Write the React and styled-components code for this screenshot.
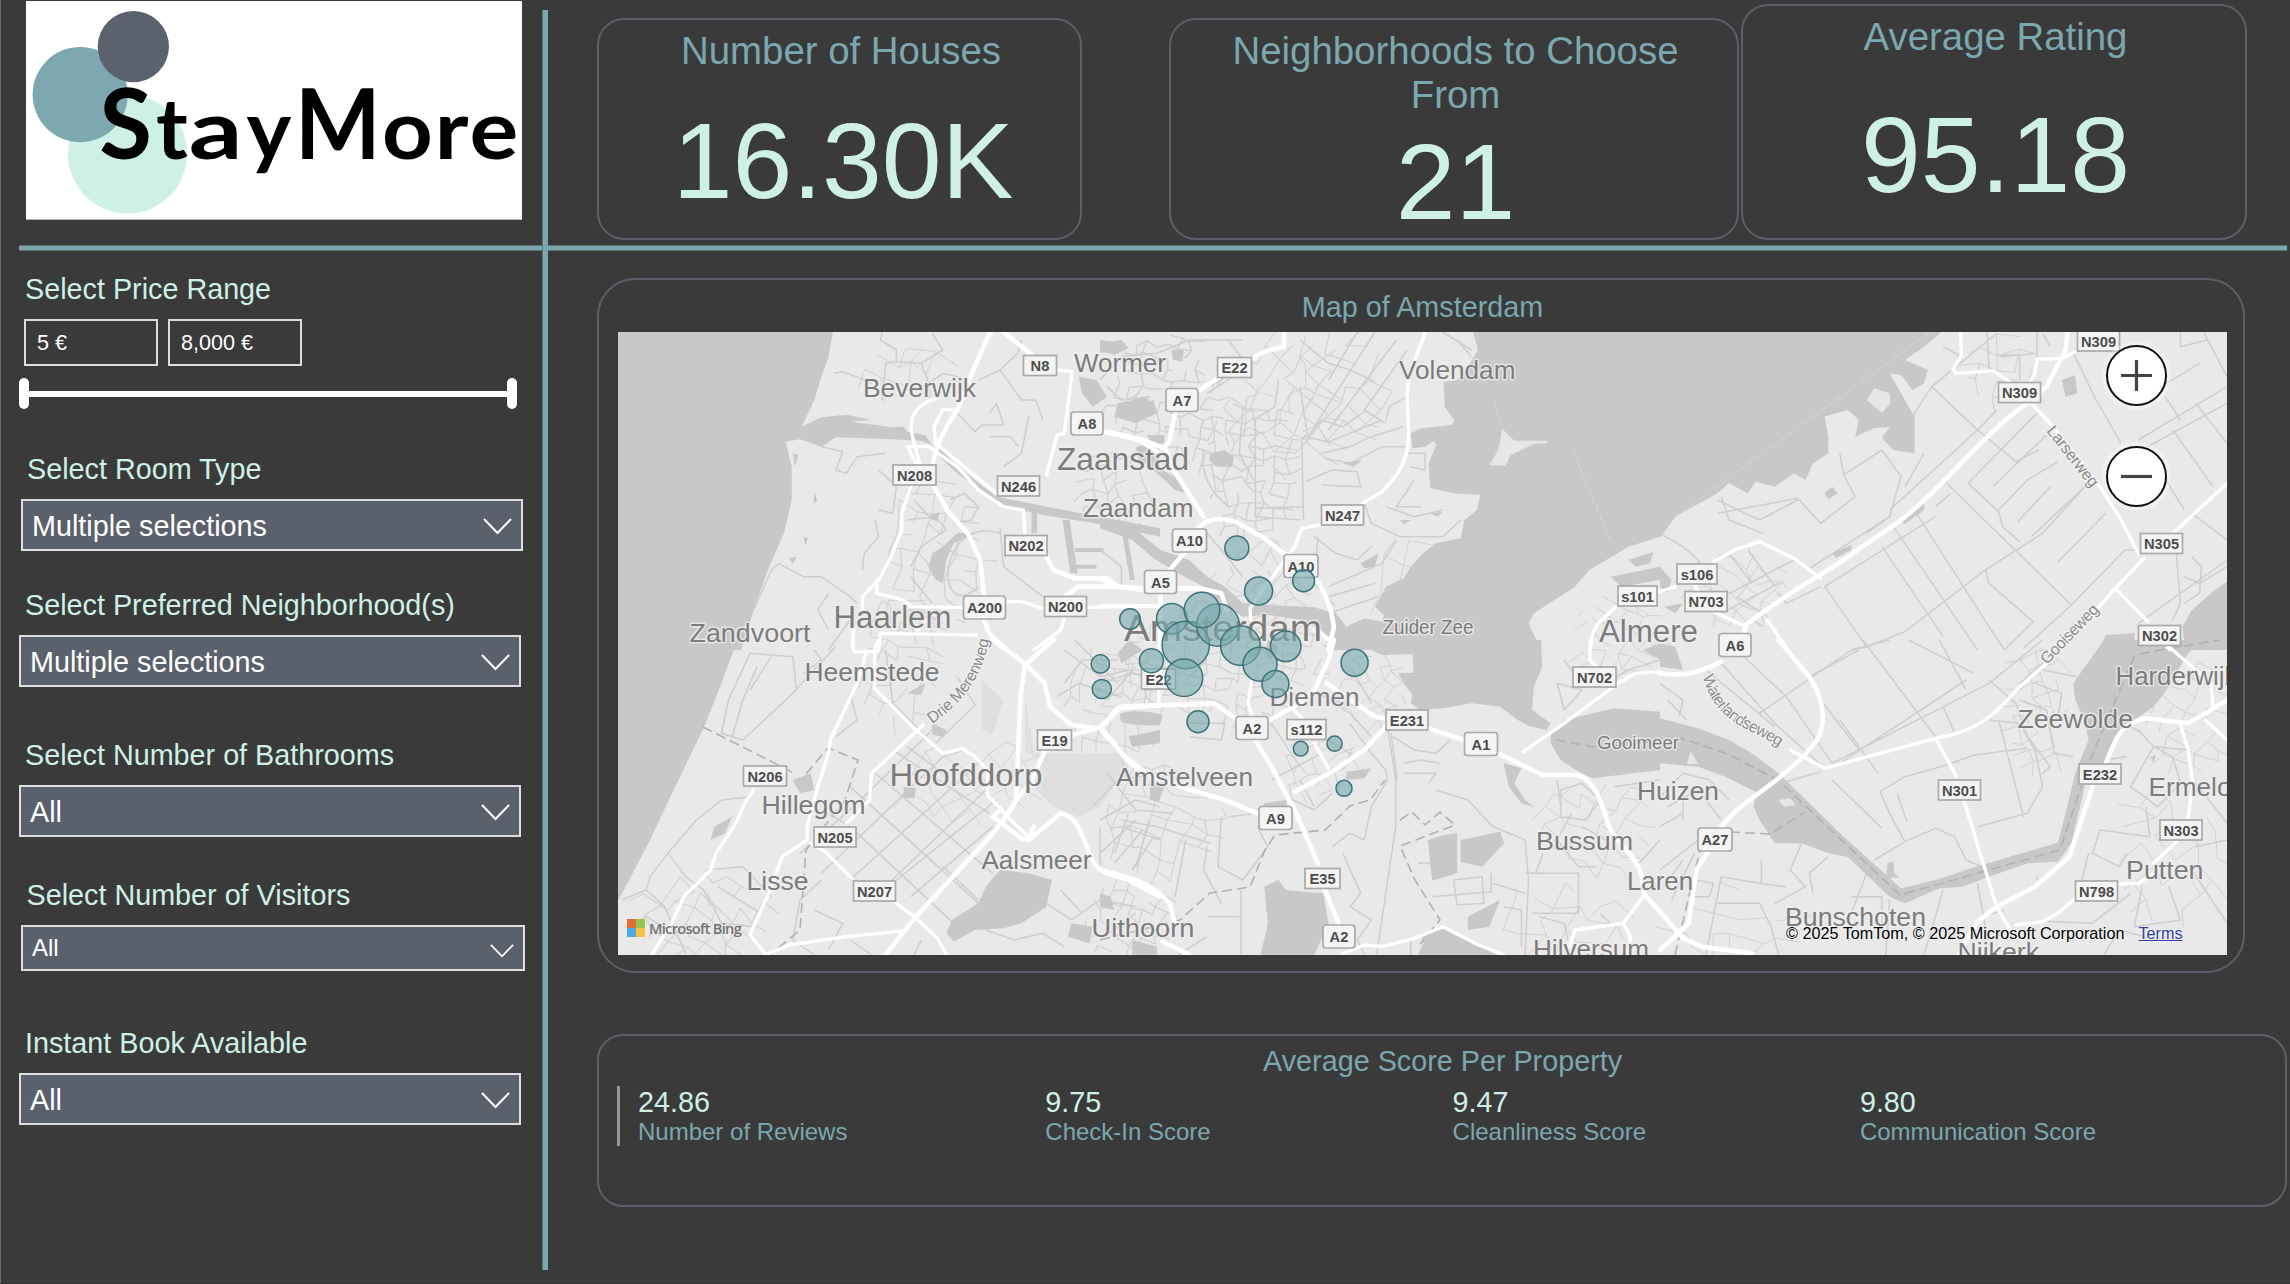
import React from "react";
import styled, { createGlobalStyle } from "styled-components";

const c = {
  bg: "#3a3a3a",
  mint: "#cff0e6",
  teal: "#7ba7af",
  slate: "#5b616c",
  line: "#5b606b",
  soft: "#5b7175",
};

const Global = createGlobalStyle`
  html, body { margin: 0; background: ${c.bg}; }
  *, *::before, *::after { box-sizing: border-box; }
  body { font-family: "Liberation Sans", Arial, sans-serif; overflow: hidden; }
`;

const Page = styled.div`
  display: grid;
  grid-template-columns: 542px 6px 1fr;
  grid-template-rows: 245px 6px 1fr;
  width: 2290px;
  height: 1284px;
  background: ${c.bg};
  border-bottom: 1px solid #333;
  box-shadow: inset 1px 0 #6c6c6c;
`;

const HRule = styled.div`
  grid-column: 1 / 4;
  grid-row: 2;
  margin: 0 3px 0 19px;
  background: ${c.teal};
  border: solid ${c.soft};
  border-width: 1px 0;
`;

const VRule = styled.div`
  grid-column: 2;
  grid-row: 1 / 4;
  margin: 10px 0 13px;
  background: ${c.teal};
  border-left: 1px solid ${c.soft};
`;

const LogoCell = styled.div`
  grid-column: 1;
  grid-row: 1;
  padding: 1px 0 0 26px;
`;

const Logo = styled.svg`
  display: block;
  width: 496px;
  height: 219px;
  background: #fff;
  border-bottom: 1px solid #b5b5b5;
  font-family: Lato, sans-serif;
  font-weight: 700;
`;

const Sidebar = styled.aside`
  grid-column: 1;
  grid-row: 3;
  display: flex;
  flex-direction: column;
  padding-top: 22px;
`;

const Filter = styled.section`
  display: flex;
  flex-direction: column;
  gap: 14px;
  height: ${(p) => p.$h}px;
  padding-left: ${(p) => p.$x}px;
`;

const FilterLabel = styled.label`
  padding-left: ${(p) => p.$inset}px;
  line-height: 32px;
  font-size: 28.75px;
  color: ${c.mint};
  white-space: nowrap;
`;

const Select = styled.div`
  display: flex;
  align-items: center;
  justify-content: space-between;
  width: ${(p) => p.$w}px;
  height: ${(p) => (p.$small ? 46 : 52)}px;
  padding: ${(p) => (p.$small ? "0 9px 0 9px" : "2px 9px 0 9px")};
  border: 2px solid #dedede;
  background: ${c.slate};
  color: #fff;
  font-size: ${(p) => (p.$small ? 24 : 28.75)}px;
`;

const Chevron = styled.svg`
  width: ${(p) => (p.$small ? 24 : 29)}px;
  height: ${(p) => (p.$small ? 14 : 17)}px;
  margin-top: ${(p) => (p.$small ? 5 : 1)}px;
  fill: none;
  stroke: #fff;
  stroke-width: 2;
`;

const PriceRow = styled.div`
  display: flex;
  gap: 10px;
  padding-left: 5px;
`;

const PriceInput = styled.div`
  width: 134px;
  height: 47px;
  padding: 0 11px;
  border: 2px solid #dcdcdc;
  color: #fff;
  font-size: 21.6px;
  line-height: 44px;
`;

const Slider = styled.div`
  display: flex;
  align-items: center;
  width: 498px;
  height: 31px;
  margin-top: -2px;
`;

const Handle = styled.div`
  width: 10px;
  height: 31px;
  border-radius: 5px;
  background: #fff;
`;

const Track = styled.div`
  flex: 1;
  height: 6px;
  margin: 0 -1px;
  background: #fff;
`;

const Kpis = styled.header`
  grid-column: 3;
  grid-row: 1;
  display: flex;
  align-items: flex-end;
  padding: 0 0 5px 49px;
`;

const Kpi = styled.section`
  width: ${(p) => p.$w}px;
  height: ${(p) => p.$h}px;
  margin-right: ${(p) => p.$gap}px;
  padding: 9px 50px 0 53px;
  border: 2px solid ${c.line};
  border-radius: 27px;
  text-align: center;
`;

const KpiTitle = styled.h2`
  margin: 0;
  font-size: 38.4px;
  font-weight: 400;
  line-height: 44px;
  color: ${c.teal};
`;

const KpiValue = styled.div`
  margin-top: ${(p) => p.$mt}px;
  padding-left: ${(p) => p.$shift || 0}px;
  font-size: 107.5px;
  line-height: 110px;
  color: ${c.mint};
`;

const Main = styled.main`
  grid-column: 3;
  grid-row: 3;
  display: flex;
  flex-direction: column;
  gap: 61px;
  padding: 27px 3px 0 49px;
`;

const PanelTitle = styled.h3`
  margin: 0;
  font-size: 28.75px;
  font-weight: 400;
  line-height: 32px;
  text-align: center;
  padding-left: 1px;
  color: ${c.teal};
`;

const MapPanel = styled.section`
  width: 1648px;
  height: 695px;
  padding: 11px 17px 0 19px;
  border: 2px solid ${c.line};
  border-radius: 38px;
`;

const MapFrame = styled.div`
  position: relative;
  margin-top: 9px;
  width: 1609px;
  height: 623px;
  overflow: hidden;
`;

const MapSvg = styled.svg`
  display: block;
  width: 1609px;
  height: 623px;
  background: #e9e9e9;
`;

const MapControls = styled.div`
  position: absolute;
  top: 13px;
  right: 60px;
  display: flex;
  flex-direction: column;
  gap: 40px;
`;

const ZoomButton = styled.button`
  display: grid;
  place-items: center;
  width: 61px;
  height: 61px;
  padding: 0;
  border: 2px solid #111;
  border-radius: 50%;
  background: #fff;
  box-shadow: 0 0 0 4px rgba(255, 255, 255, 0.35);

  svg { width: 31px; height: 31px; stroke: #444; stroke-width: 3.2; }
`;

const BingMark = styled.div`
  position: absolute;
  left: 9px;
  bottom: 18px;
  display: flex;
  align-items: center;
  gap: 4px;
  color: #737373;
  font: 600 14.6px/18px "Open Sans", sans-serif;
  letter-spacing: -0.7px;
`;

const BingTiles = styled.div`
  display: grid;
  grid-template-columns: 9px 9px;
  grid-template-rows: 9px 9px;
`;

const BingTile = styled.span`
  background: ${(p) => p.$color};
`;

const Credits = styled.div`
  position: absolute;
  left: 1168px;
  bottom: 13px;
  display: flex;
  gap: 14px;
  color: #000;
  font-size: 16.2px;
  line-height: 18px;
  white-space: nowrap;
  text-shadow: 0 0 2px #fff;
`;

const TermsLink = styled.span`
  color: #2f3fa0;
  text-decoration: underline;
`;

const ScorePanel = styled.section`
  height: 173px;
  padding: 9px 18px 0;
  border: 2px solid ${c.line};
  border-radius: 26px;
`;

const ScoreRow = styled.div`
  display: grid;
  grid-template-columns: repeat(4, 407.3px);
  height: 60px;
  margin-top: 9px;
  padding-left: 18px;
  border-left: 3px solid #979593;
`;

const Score = styled.div`
  display: flex;
  flex-direction: column;
`;

const ScoreValue = styled.span`
  font-size: 28.75px;
  line-height: 32px;
  color: ${c.mint};
`;

const ScoreLabel = styled.span`
  font-size: 24px;
  line-height: 27px;
  color: ${c.teal};
`;

/* ---------- map data ---------- */

const TILES = [
  {
    t: "translate(600 320) scale(.35714 .33333)",
    water: [
      "M0 36H652L640 110L620 170L600 240L565 320L620 292L690 284L760 300L700 305L820 322L850 320L860 335L910 345L930 375L900 362L800 357L660 352L620 380L560 358L520 365L537 440L537 540L515 640L470 750L430 870L395 990H0Z",
      "M950 385L1020 455L1110 530L1250 560L1400 590L1568 625V650L1400 612L1240 585L1120 555L1000 460L930 390Z",
      "M1208 570h16v70h-16zM1295 600h20l22 160h-20zM1330 684h80v12h-80zM1330 734h60v12h-60zM1458 615l14 0l26 165h-14z",
      "M930 700L960 680L1000 640L1050 640L990 670L970 720L960 790L940 780L920 740Z",
      "M1400 70L1460 60L1480 85L1440 105L1400 92ZM1340 170L1390 180L1420 230L1380 260L1350 220ZM1450 250L1530 230L1560 280L1500 310L1440 290ZM1500 380L1568 370V440L1510 430Z",
      "M540 400L556 405L545 440ZM600 515L608 540L598 552ZM570 650L582 655L575 678ZM530 715L550 710L540 732ZM920 590L950 575L945 605Z",
    ],
    dim: [],
    roads: [
      "M1095 36C1060 100 1040 170 1000 270C960 330 940 380 930 440M930 490L975 575L1030 640L1065 720L1075 830M1075 900L1090 940L1140 990",
      "M1130 36L1215 110M1410 335L1510 360L1568 400",
      "M1250 710L1270 750L1330 775L1420 775L1450 800L1520 810M1300 830L1340 800L1450 800",
    ],
    lanes: [
      "M1270 148L1322 155L1310 260L1300 340L1280 345L1250 465",
      "M940 235C890 250 860 290 875 350L895 430M985 270L960 268L935 320L940 370L1110 520M860 380L920 380L1000 440L1060 510L1130 560L1185 570L1190 640M862 380L885 430",
      "M870 500L845 580L845 630L815 710L780 780L735 830L735 870M775 780V820L850 840L870 860L1015 862M890 930L910 900",
      "M1140 845L1180 845L1240 865M1365 862L1568 858M1300 895L1290 930L1215 990M780 990L785 940L1055 945M710 925L708 985",
    ],
    minor: [
      "M790 36L785 60L830 90L830 125L800 130L790 240M830 125L900 130L960 90L930 40M655 160L680 155L730 175L760 190M900 130L920 190L960 160L1000 170L1040 190",
      "M1060 180L1120 150L1180 240L1220 240L1240 300M1120 150L1170 100L1180 60M1000 280L1050 335L1070 315L1130 315L1110 250L1090 280M1090 350L1150 350L1170 380M1200 290L1180 400L1130 440",
      "M620 380L680 395L660 450L690 460L720 410L800 400M500 730L480 750L430 870M500 730L570 770L620 770L700 830L720 850M640 820L610 870L640 930M780 450L830 500L820 580L780 570",
      "M770 600L780 650L740 700L735 750M860 600L940 590L970 630L900 680L870 740M880 540L930 600M980 540L1020 520L1060 560L1040 600L990 610M1120 620L1130 740L1240 830M870 770L930 850M820 870L900 870L960 910M700 900L640 990",
      "M975 740C1000 640 1060 620 1120 640M975 740C970 830 1010 850 1060 800",
    ],
  },
  {
    t: "translate(1100 320) scale(.35714 .33333)",
    water: [
      "M1045 36L1058 90L1030 140L1000 180L962 185L965 260L992 300L985 315L900 325L870 340L875 385L910 380L935 362L942 375L920 430L925 505L990 520L1065 525L1055 570L1020 600L1010 655L940 670L905 700L870 740L850 775L800 800L770 860L795 885L790 905L740 895L690 920L660 880L600 862L480 856L470 884L560 900L620 930L660 975L640 990H1235L1200 910L1215 880L1330 800L1370 750L1480 680L1568 650V36Z",
      "M0 590L100 630L170 690L250 720L300 770L350 800L400 850L480 856L470 884L400 890L340 850L290 800L220 760L150 715L90 660L0 625Z",
      "M310 400L350 390L375 410L370 440L330 440L305 420ZM130 345L180 345L180 370L150 375ZM90 260L150 240L160 280L120 290ZM200 90L235 90L230 125L205 120ZM0 60L60 70L50 95L0 98ZM120 420L210 470L240 520L210 510Z",
      "M730 730L780 700L770 740L740 745ZM680 430L735 420L710 440ZM840 600L870 600L850 612ZM925 580L960 575L945 590Z",
      "M1430 770L1568 740V780L1460 800ZM1480 720L1550 695L1540 730L1500 740Z",
    ],
    land: ["M1125 325L1160 362L1255 362L1250 370L1215 372L1150 405L1135 437L1090 435L1110 400L1120 370Z"],
    dim: [],
    roads: [
      "M515 36V80L460 95L420 120M330 175L280 210M210 280L195 360L180 385L120 360L20 335M185 390L200 440L290 590",
      "M275 625C300 590 350 595 380 605L460 655L520 705M600 770C640 830 650 880 655 920L640 990",
      "M235 700L195 750M0 775L40 800L120 805M215 805L280 805L340 820L355 870M170 820L168 990M600 930L650 965",
    ],
    lanes: [
      "M910 36C890 110 865 140 862 200C855 260 870 320 862 380C850 450 820 480 790 515L735 550M615 615L565 625L545 680L525 710L450 820L420 865L422 900",
      "M0 858L150 858M1445 860L1395 910L1380 940L1372 990",
    ],
    minor: [
      "M560 200L580 340L565 360L570 600M560 60L640 130L700 150L770 185M770 36L600 320M720 36L640 180M830 60L640 330M860 90L740 270L800 310M580 350L620 300L680 320L740 275M570 350L640 365L700 340L790 300",
      "M620 400L700 380L760 350L850 320M630 415L700 430L790 380L860 380M575 485L650 450L720 455L730 500L620 495M435 300V590L560 600M435 565L570 560M800 300L810 260L860 230",
      "M740 550L760 610L840 650L960 650L1010 600M800 560L880 590L960 570M880 480L830 560L900 560M860 400L910 400V450L870 440M1000 60L1040 110M960 36L1040 90",
      "M290 390C280 460 310 520 360 560M400 260L390 400L430 480M500 180L490 260L430 300M360 60L400 120L340 180L180 270M430 130L300 220M20 200L60 240L140 230M0 180L60 110L160 100L250 60L400 60",
      "M610 650L600 790L660 860M640 800L790 730L830 660M640 830L770 790M640 880L780 830M600 650L660 700L720 720L760 680M300 640L340 690L400 770M0 690L60 740V800",
    ],
  },
  {
    t: "translate(1660 320) scale(.38266 .33333)",
    water: [
      "M0 36H735L690 80L640 120L700 150L690 190L660 210L630 165L600 160L640 240L665 290L665 400L610 390L580 355L600 320L560 325L510 350L520 300L490 270L430 290L440 350L440 400L400 430L380 480L350 460L300 500L250 485L230 520L180 490L150 520L40 590L0 655Z",
      "M1482 785L1450 810L1390 870L1365 920L1372 990H1482Z",
      "M1050 180L1085 165L1090 220L1060 230ZM430 520L450 500L465 520L440 538ZM630 600L690 550L690 570L640 612ZM450 700L500 675L500 690L460 715Z",
      "M1165 945L1240 940V990H1150Z",
      "M0 740L30 780L20 820L0 800ZM10 860L60 850L40 880Z",
    ],
    land: ["M560 205L600 220L602 250L580 278L540 240Z"],
    dim: [],
    roads: [
      "M960 250C880 310 790 430 700 530C620 620 560 650 480 720C400 780 330 820 225 915L220 940",
      "M1065 36L1060 90L1010 200L960 250",
    ],
    lanes: [
      "M785 36L788 105L765 150L775 160L870 152L920 190M1085 95L1050 115L985 118L980 160L965 190M970 250L1020 310L1150 500L1200 590L1250 700M1482 490L1345 635M1265 715L1190 805L1140 870L1020 990M1190 805L1275 905",
      "M140 725L195 690L260 665L350 715L420 775M90 790L100 815M130 870L225 920M0 815L40 800M280 900L335 990M1325 980L1333 990",
    ],
    minor: [
      "M600 570L830 330L880 270M710 200L830 330L930 425L990 390M805 490L985 280M870 500L1010 345M805 490L885 575L895 620L940 665M885 570L960 480L1040 425M935 605L1020 500M970 650L1120 490M1040 725L1165 580",
      "M850 750L1000 640L1110 500M430 800L720 590M385 750L600 590M430 800L540 980L640 935L850 750M540 980L500 990M580 680L740 950M610 620L830 990M670 580L860 920L900 990M745 485L1075 855M760 520L720 560M850 750L860 790L975 905L900 990M1075 855L950 985M1075 855L1215 690H1245",
      "M660 290L710 200L880 40M740 80L780 105V130M855 36L860 150M880 105H940V180M890 110L980 100M985 36V110M1000 40L1020 80M580 390L480 465L510 530L420 610L360 535L150 580M580 390L630 470L600 590L540 640M480 465L470 400M690 400L640 500",
      "M1080 100L1140 240L1205 370M1310 200L1410 130M1250 360L1482 200M1210 420L1482 250M1400 250L1482 370M1340 330L1445 500M1290 420L1370 570M1420 36L1482 170M1360 36V80L1430 60M1320 230L1360 300",
      "M1345 640L1360 850L1340 900M1390 710L1415 740L1410 820L1370 850M1390 580L1482 660M1370 770L1410 790L1482 740M1250 910L1482 720M160 530L180 600L270 640M150 540L260 600L360 540",
      "M0 640L60 680L100 720L110 760M130 850L250 780L350 720M160 880L310 790M180 700L240 790M230 690L300 800M200 830L280 890M310 820L330 850L420 800M240 900L270 920",
    ],
  },
  {
    t: "translate(600 640) scale(.35714 .33333)",
    water: [
      "M0 0H385L340 130L290 265L215 430L140 600L52 780H0Z",
      "M1120 690L1200 700L1265 720L1250 800L1180 850L1130 865L1050 870L990 905L970 880L985 840L1060 790L1080 740Z",
      "M1455 220Q1510 205 1568 225V255Q1510 260 1460 245ZM1480 290L1568 270V310L1490 320ZM1480 0L1520 30L1460 70L1450 40Z",
      "M930 250L970 270L965 290L930 285ZM850 440L885 445L880 475L850 475ZM540 420L590 400L600 450L560 460ZM320 560L370 530L350 580L310 600ZM860 160L910 130L900 165Z",
      "M1320 850L1380 860L1370 910L1310 890ZM1490 900L1560 920V944H1490Z",
    ],
    dim: ["M1190 170L1215 340H1450L1480 375L1400 500L1340 530L1270 500L1220 450L1240 350L1190 340ZM1070 120L1130 180L1100 280L1070 270Z"],
    roads: [
      "M1100 0L1190 70L1245 130L1260 200L1320 255L1390 265M1270 0L1190 75L1178 160L1165 480L1145 520M1320 285L1400 262L1450 205L1568 195M1400 262L1440 310L1475 360L1510 390",
      "M1245 335L1205 430L1165 480L1130 540L1100 580L880 835L800 944",
      "M1215 560L1200 600L1180 595L1100 530L1120 510M1200 600L1290 520C1340 530 1350 590 1370 640C1390 700 1420 700 1480 720L1568 770",
    ],
    lanes: [
      "M780 0L770 20L768 145L820 200L880 265L960 340L1015 325L1050 350L1085 390V465L1150 540L1200 590M705 0L712 35L775 35",
      "M745 40L720 130L645 300L640 340L610 440L580 560V600L510 650L480 740L420 885L465 944L530 915L690 890L850 873",
      "M430 450L405 490L380 550L325 640L310 690L235 770L200 850L145 944M905 255L850 310L760 400L755 480L690 550M590 610L630 635L705 715M830 790L885 835L945 895L970 944",
    ],
    minor: [
      "M420 40L540 50L550 150L490 210L400 300L340 280L360 180ZM440 80L400 180L370 290M480 50L420 150M530 170L660 20M600 30L620 60L570 100",
      "M270 540L340 480L420 470M270 540L190 640L140 710L130 750M190 640L240 710L290 750L310 800M300 690L400 680L480 770M60 780L130 750L180 800L240 940M70 860L130 830L190 870M330 740L450 820M300 760L340 850L440 860",
      "M640 520L700 560L1000 860M700 440L1060 790M760 390L1100 700M820 330L1090 520M560 640L720 490L940 260M620 700L980 330M700 720L1060 370M760 780L1080 450M830 720L1110 480M560 780L620 720M870 770L1100 560M960 680L1060 780",
      "M820 190L960 340M1000 110L1050 195L940 310M860 320L960 400M800 30L820 190M700 160L720 240L660 290M1300 130L1350 60L1450 60M1300 30L1400 110L1480 90M1280 170L1340 130L1460 170M1330 0L1450 130",
      "M1380 500L1450 420L1568 400M1400 540L1500 480L1568 500M1460 560L1568 600M1480 520L1440 640M1540 540L1500 680M1400 560L1400 700M1250 790L1320 840L1400 780L1500 800M1290 750L1350 820M1400 900L1500 820M560 780L540 900L600 944M600 810L680 850L640 930M700 900L760 944M900 900L880 944M1080 870L1160 900L1240 880L1300 920",
    ],
  },
  {
    t: "translate(1100 640) scale(.35714 .33333)",
    water: [
      "M660 0L760 30L790 45L875 42L878 98L835 100L850 130L875 165L870 190L895 210L960 205L1040 190L1120 200L1170 240L1200 258L1250 270L1262 250L1210 210L1215 140L1238 80L1235 0Z",
      "M1262 280L1300 240L1440 205L1568 215V390L1380 415L1340 395L1290 360L1262 310Z",
      "M460 740L500 720L520 750L570 755L625 760L640 850L600 944H450L470 850Z",
      "M918 600L960 585L1000 580L1000 700L930 722ZM1010 600L1120 575L1132 610L1070 680L1010 665Z",
      "M900 880L970 865L1040 900L1110 944H890L905 910Z",
      "M55 225Q120 205 175 225L170 250Q110 262 60 245ZM140 430L180 440L165 485L140 480ZM690 395L760 385L740 415L690 420ZM1130 370L1180 385L1160 430L1190 480L1215 500L1180 490L1145 440ZM460 490L520 480L530 520L450 520ZM1030 830L1120 780L1090 860L1030 870ZM1520 30L1568 10V60Z",
      "M470 0L500 20L480 60L460 40ZM0 760L30 770L40 810L0 800Z",
    ],
    dim: ["M0 340L60 370L80 410L0 450Z"],
    roads: [
      "M0 265L60 200L320 190L380 235M0 265L70 350L130 400L240 445L350 480L440 520M655 0L640 60L600 150L560 190L475 240M635 130L770 230L800 235",
      "M435 300L480 380L545 510L610 670M630 750L670 855M545 455L650 395L740 330L800 260M920 265L1020 300",
      "M1115 340L1240 405L1340 405C1390 430 1400 480 1420 540C1430 600 1500 640 1515 700L1525 765L1568 815M0 690C80 710 150 730 195 790L210 850M175 905L250 944",
    ],
    lanes: [
      "M165 150V195M425 120L415 190L425 225M600 310L640 385M530 195L570 240M1372 0V60L1390 80M1185 335L1280 265L1450 130L1500 100L1568 95",
      "M1525 765L1465 850L1330 870L1315 920M1465 850L1485 890L1480 944M680 940L740 915L790 920L880 895L960 860L1060 915L1130 944",
    ],
    minor: [
      "M805 260L828 420V560L800 760L775 944M815 280L832 420",
      "M820 290L880 330L940 340L980 300M850 370L900 360L950 370M850 400H940L920 430M700 250L760 340L800 390L805 420L760 500L740 600L700 580L650 620M600 150L700 220L760 290",
      "M940 450L1030 480L1100 560L1190 600L1200 720L1190 944M1190 700H1340V820H1210M990 720L1070 710L1075 790L1000 795ZM930 770L1095 755V700M1100 730L1190 760M890 670H950V700M1130 800L1180 810V920",
      "M20 400L100 510L200 520M60 540L160 560L310 610M0 640L100 540M40 670L120 570M90 690L150 590M300 620L290 690L340 790M340 530L330 680L400 720L470 620L440 560M360 530L440 520M210 770L240 600",
      "M250 250L350 250L340 300L250 290M480 250L560 380M480 420L620 340M520 470L600 510L650 460M560 420L600 500M640 300L700 340L680 390M240 120L300 60M0 130L90 100L160 120M20 180L100 80",
      "M395 750V944M300 830H390M300 890L220 944M680 640L730 760L700 800L760 840L720 900L740 944M870 900V944M1290 450L1350 430L1400 480L1360 540L1290 530ZM1320 520L1280 600L1340 680L1390 680M1350 560L1420 600M1240 640L1220 700M1280 420L1290 500M1440 440L1568 420",
      "M1390 140L1480 90L1568 60M1280 130L1300 210L1350 150ZM1300 60L1340 120M1400 820L1430 850M1230 830L1300 850L1310 900M1500 680L1568 600M700 80L760 190M640 180L730 200",
    ],
  },
  {
    t: "translate(1660 640) scale(.38266 .33333)",
    water: [
      "M0 235L100 265L180 300L240 340L310 400L480 590L630 745L720 720L840 675L1040 608L1060 520L1085 400L1120 300L1110 240L1085 180L1080 130L1160 0H1420L1380 40L1330 140L1290 200L1240 240L1190 290L1160 370L1112 430L1075 610L1040 665L960 670L860 710L790 740L730 745L640 790L600 770L490 650L440 640L370 610L300 610L260 540L245 500L250 455L170 410L100 380L0 370Z",
      "M595 670L610 665L612 700L625 712L590 715ZM1282 350L1296 345L1290 370Z",
      "M0 10L40 20L60 90L0 80Z",
    ],
    land: ["M70 372L80 335L100 372ZM310 480L340 475L355 495L325 500Z"],
    dim: [],
    roads: [
      "M0 100C60 110 100 100 160 65M310 0L390 110C430 180 435 250 410 300L375 350L310 415L200 510L160 560M125 635L95 690L75 850L0 930",
      "M0 815L60 895L110 920L240 940M1482 180L1440 210L1380 250L1270 235C1200 250 1190 300 1165 370M1130 440L1070 650L980 740L880 800L830 845",
    ],
    lanes: [
      "M340 330L375 350L430 385L720 295C850 270 890 200 940 140L1020 60M720 295L775 410M795 485L850 690L880 800L915 870M830 845L780 944",
      "M1360 255L1380 330L1392 430L1380 535M1350 605L1290 670M1290 700L1250 730L1200 732M1085 775L1040 820L1000 845L930 855M1330 20L1390 80L1440 130L1445 200M1425 240L1482 300",
    ],
    minor: [
      "M160 70L300 250L430 385M200 30L330 170L450 370M120 90L300 260M260 220L500 30L600 0M390 110L520 30M420 180L520 330M470 240L570 400M450 370L860 130L1000 0M470 370L800 120M530 0L720 290M650 0L820 100M740 200L770 280M730 0L800 150",
      "M750 375L640 410L575 455L600 520L640 605L720 565L770 590L800 660L840 680M640 605L560 660M750 375L820 345L960 325M885 240L950 530M830 560L960 520L1000 440L980 330L940 250L860 240M620 460L645 545M330 425L420 395M450 420L580 565",
      "M860 120L930 190L960 290L1020 380L1000 400M940 180L1010 210L1030 340L1080 350M980 130L1050 160L1040 230M1000 90L1090 110M940 130L1030 40",
      "M1290 320L1340 350L1360 430L1300 500L1230 440ZM1220 350L1160 360M1250 270L1290 320L1380 330M1400 430L1482 550M1270 500L1280 590L1150 570L1130 640L1200 680L1220 640M1120 640L1090 780M1230 760L1130 850L1000 844M1260 740L1240 860L1360 840L1330 740M1390 690L1482 850M1400 620L1482 600M1160 944L1200 870L1300 900M1200 240L1260 280",
      "M370 610L340 690L380 740L300 790M440 650L390 700L400 760M160 710L260 730L330 740M150 790L260 790L290 860L310 944M160 710L120 944M265 660V730M500 770L580 770V850M600 780L590 944M540 700L500 820M740 750L690 944M830 730L850 860M900 810L840 830M985 705V720",
      "M0 130L60 180L50 230M20 180L70 240M0 470L60 400L130 420L180 480M20 500L100 450L160 540M60 540V440M0 560L60 520M0 690L100 600M10 740L60 660M30 780L90 640M90 720L140 730L130 770H90",
    ],
  },
];

const BORDERS =
  "M703 727L796 774M806 774L828 748L858 760L845 800L806 850L800 930L770 955M1100 940L1180 920L1210 893L1250 887L1265 850L1275 835L1325 830L1350 806L1370 800L1385 780M1400 820L1412 812L1425 825L1440 812L1455 825L1400 846L1415 880L1440 920L1420 944M1556 740L1600 748L1680 738L1730 755L1778 780L1900 895L2060 850L2090 760L2135 655L2160 650L2220 640M1730 832L1770 834L1805 812M1675 955L1700 850";

const TOWNS = [
  ["Beverwijk", 863, 397, 26, 113],
  ["Wormer", 1074, 371.5, 26, 92],
  ["Volendam", 1399, 379, 26, 116.5],
  ["Zaanstad", 1057, 469.5, 30.5, 132],
  ["Zaandam", 1083, 517, 26, 110.5],
  ["Haarlem", 833.5, 628, 31, 118],
  ["Zandvoort", 689.5, 641.5, 26, 121],
  ["Heemstede", 804.5, 681, 26, 135],
  ["Hoofddorp", 889.5, 786, 31, 153],
  ["Hillegom", 761.5, 814, 26, 104],
  ["Lisse", 746.5, 890, 26, 62],
  ["Aalsmeer", 981.5, 868.5, 26, 110],
  ["Uithoorn", 1091.5, 936.5, 26, 103],
  ["Amstelveen", 1116, 785.5, 26, 137],
  ["Amsterdam", 1124, 640.5, 37.5, 198],
  ["Diemen", 1269.5, 706, 26, 90],
  ["Almere", 1599, 642, 31, 99],
  ["Bussum", 1536, 850, 26, 97],
  ["Huizen", 1637, 800, 26, 82],
  ["Laren", 1627, 890, 26, 66],
  ["Hilversum", 1533, 958, 26, 116],
  ["Bunschoten", 1785, 925.5, 26, 141],
  ["Nijkerk", 1957.5, 961, 26, 81.5],
  ["Zeewolde", 2017.5, 728, 26, 115.5],
  ["Harderwijk", 2115.5, 684.5, 26, 122],
  ["Ermelo", 2148.5, 795.5, 26, 83],
  ["Putten", 2126, 879, 26, 77.5],
  ["Zuider Zee", 1382.5, 633.5, 19.5, 91],
  ["Gooimeer", 1597, 748.5, 18.5, 82],
];

const STREETS = [
  ["drie", "Drie Merenweg", "M932 724Q982 690 989 638", 105],
  ["larser", "Larserweg", "M2046 431L2091 488", 73],
  ["gooise", "Gooiseweg", "M2047 665L2101 609", 76],
  ["waterland", "Waterlandseweg", "M1703 676Q1711 712 1748 730T1785 753", 108],
];

const SHIELDS = [
  ["N8", 1040, 365.5, 35], ["A8", 1087, 423.5, 34, 1], ["N208", 914.5, 475, 45], ["N246", 1018.5, 486, 44],
  ["N202", 1026, 545.5, 44], ["A200", 984.5, 607.5, 44, 1], ["N200", 1065.5, 606.5, 44], ["A7", 1182, 400, 34, 1],
  ["E22", 1234.5, 367.5, 36], ["A10", 1189.5, 540.5, 36, 1], ["A10", 1301, 566, 36, 1], ["A5", 1160.5, 582, 34, 1],
  ["N247", 1342.5, 515, 44], ["s101", 1637.5, 596, 41], ["s106", 1697, 574, 42], ["N703", 1706, 601.5, 44],
  ["A6", 1735, 645, 34, 1], ["N309", 2019.5, 392.5, 44], ["N309", 2098.5, 341, 44], ["N305", 2161.5, 543.5, 44],
  ["N302", 2159.5, 635.5, 44], ["E19", 1054.5, 740, 36], ["N206", 765, 776, 45], ["N205", 835, 837, 44],
  ["N207", 874.5, 891, 44], ["E22", 1158.5, 679, 36], ["A2", 1252, 728, 34, 1], ["s112", 1306.5, 729.5, 41],
  ["E231", 1407, 720, 44], ["A1", 1481, 744, 35, 1], ["N702", 1594.5, 677, 45], ["A9", 1275.5, 818, 35, 1],
  ["E35", 1322.5, 878.5, 37], ["A2", 1339, 936.5, 34, 1], ["A27", 1715, 839.5, 36, 1], ["N301", 1959.5, 790, 44],
  ["E232", 2100, 774, 44], ["N303", 2181, 830, 44], ["N798", 2096.5, 891, 44],
];

const BUBBLES = [
  [1236.8, 548, 12], [1258.6, 591, 14], [1303.6, 580.7, 11], [1130, 619, 10.3], [1171.8, 618.7, 15.3],
  [1185.7, 645, 23.7], [1217.9, 625, 21.3], [1202, 610, 17.8], [1240.4, 645.5, 19.8], [1285.7, 646.3, 15.3],
  [1151.4, 660.7, 12], [1184, 677.7, 18.7], [1260, 664.3, 17], [1275.4, 684, 13.5], [1354.6, 662.7, 13.5],
  [1198, 721.7, 11], [1300.7, 748.7, 7.4], [1334.6, 743.7, 7.6], [1344, 788.3, 8], [1100.4, 664, 9.2], [1101.8, 689, 9.6],
];

/* Dense ditch and street mesh: [x, y, width, height, angle, step, stroke] */
const MESHES = [
  [1110, 335, 110, 120, 8, 11, 1.5], [1200, 400, 95, 130, 4, 12, 1.4], [1080, 450, 75, 80, 75, 13, 1.3],
  [1210, 335, 110, 130, -55, 18, 1.1], [1290, 340, 90, 120, -60, 19, 1.1], [860, 340, 110, 60, 20, 20, 1],
  [880, 480, 100, 150, 15, 16, 1.2], [1130, 600, 190, 120, 10, 12, 1.2], [1070, 640, 80, 110, 12, 13, 1.1],
  [1215, 540, 90, 100, 45, 12, 1.1], [1330, 650, 80, 70, 50, 12, 1], [1110, 760, 110, 110, 15, 17, 1.1],
  [1280, 740, 80, 60, -30, 12, 1], [1580, 590, 80, 90, 35, 12, 1], [1690, 550, 90, 70, 40, 13, 1],
  [1540, 780, 110, 90, 30, 16, 1], [640, 870, 130, 80, 40, 17, 1.1], [1080, 880, 90, 70, 25, 12, 1.2],
  [2150, 660, 75, 110, 30, 16, 1], [2130, 780, 90, 140, 60, 22, 1], [1650, 880, 140, 70, 8, 24, 1],
  [860, 590, 70, 130, 15, 15, 1.1], [1500, 880, 120, 70, 25, 20, 1], [1370, 540, 80, 70, 20, 24, 1],
  [2010, 650, 60, 110, 70, 13, 1], [900, 740, 150, 70, 50, 18, 1], [1960, 335, 70, 60, 5, 16, 1],
];

function meshPath([x, y, w, h, angle, step], seed) {
  let s = seed * 7919 + 17;
  const rnd = () => {
    s = (s * 16807) % 2147483647;
    return s / 2147483647;
  };
  const a = (angle * Math.PI) / 180;
  const cx = x + w / 2;
  const cy = y + h / 2;
  const span = Math.hypot(w, h) / 2;
  const n = Math.ceil((span * 2) / step);
  const pts = [];
  for (let i = 0; i <= n; i++) {
    pts[i] = [];
    for (let j = 0; j <= n; j++) {
      const u = -span + i * step + (rnd() - 0.5) * step * 0.7;
      const v = -span + j * step + (rnd() - 0.5) * step * 0.7;
      pts[i][j] = [cx + u * Math.cos(a) - v * Math.sin(a), cy + u * Math.sin(a) + v * Math.cos(a)];
    }
  }
  const inside = ([px, py]) => ((px - cx) / (w / 2)) ** 2 + ((py - cy) / (h / 2)) ** 2 < 1.15;
  const f = ([px, py]) => `${px.toFixed(1)} ${py.toFixed(1)}`;
  let d = "";
  for (let i = 0; i < n; i++) {
    for (let j = 0; j < n; j++) {
      const p = pts[i][j];
      if (!inside(p)) continue;
      if (rnd() < 0.72) d += `M${f(p)}L${f(pts[i + 1][j])}`;
      if (rnd() < 0.62) d += `M${f(p)}L${f(pts[i][j + 1])}`;
    }
  }
  return d;
}

function Tiles({ layer, ...rest }) {
  return (
    <g {...rest}>
      {TILES.map((tile) => (
        <g key={tile.t} transform={tile.t}>
          {(tile[layer] || []).map((d) => (
            <path key={d} d={d} vectorEffect="non-scaling-stroke" />
          ))}
        </g>
      ))}
    </g>
  );
}

function AmsterdamMap() {
  return (
    <MapSvg viewBox="618 332 1609 623">
      <Tiles layer="dim" fill="#dfdfdf" />
      <g fill="none" stroke="#d2d2d2">
        {MESHES.map((m, i) => (
          <path key={i} d={meshPath(m, i + 1)} strokeWidth={m[6]} />
        ))}
      </g>
      <Tiles layer="minor" fill="none" stroke="#cecece" strokeWidth="1.5" strokeLinejoin="round" />
      <Tiles layer="water" fill="#c8c8c8" />
      <Tiles layer="land" fill="#e7e7e7" />
      <path d="M1494 400L1502 430M1573 450L1610 540M1930 332L1675 517" stroke="#d8d8d8" fill="none" strokeDasharray="7 3" />
      <path d={BORDERS} fill="none" stroke="#b1b1ad" strokeWidth="1.6" strokeDasharray="10 5" />
      <Tiles layer="lanes" fill="none" stroke="#fff" strokeWidth="3.4" strokeLinejoin="round" strokeLinecap="round" />
      <Tiles layer="roads" fill="none" stroke="#fff" strokeWidth="4.6" strokeLinejoin="round" strokeLinecap="round" />
      <g fontSize="16" fill="#8a8a8a" stroke="#f1f1f1" strokeWidth="2.5" paintOrder="stroke">
        {STREETS.map(([id, name, d, len]) => (
          <React.Fragment key={id}>
            <path id={id} d={d} fill="none" stroke="none" />
            <text>
              <textPath href={`#${id}`} textLength={len}>{name}</textPath>
            </text>
          </React.Fragment>
        ))}
      </g>
      <g fill="#7c7c7c" stroke="#efefef" strokeWidth="3" strokeOpacity=".75" paintOrder="stroke" strokeLinejoin="round">
        {TOWNS.map(([name, x, y, size, len]) => (
          <text key={name} x={x} y={y} fontSize={size} textLength={len} lengthAdjust="spacingAndGlyphs">{name}</text>
        ))}
      </g>
      <g fontSize="14.7" fontWeight="700" textAnchor="middle">
        {SHIELDS.map(([name, x, y, w, motorway]) => {
          const h = motorway ? 23 : 20;
          return (
            <g key={`${name}-${x}`}>
              <rect x={x - w / 2 + 1} y={y - h / 2} width={w - 2} height={h} rx={motorway ? 3 : 0} fill="#f4f4f4" stroke="#a9a9a9" strokeWidth="1.7" />
              <text x={x} y={y + 5.5} fill="#4c4c4c">{name}</text>
            </g>
          );
        })}
      </g>
      <g fill="#78a9ae" fillOpacity=".62" stroke="#3d7277" strokeWidth="1.5">
        {BUBBLES.map(([x, y, r]) => (
          <circle key={`${x}-${y}`} cx={x} cy={y} r={r} />
        ))}
      </g>
    </MapSvg>
  );
}

/* ---------- page ---------- */

/* Wordmark letters: [glyph, left, size, advance] */
const WORDMARK = [
  ["S", 99, 98, 53],
  ["t", 156, 84, 32],
  ["a", 189, 82, 54],
  ["y", 247, 82, 45],
  ["M", 295.5, 98.5, 86],
  ["o", 383, 82, 51],
  ["r", 436, 82, 34],
  ["e", 471, 82, 49],
];

const FILTERS = [
  { label: "Select Room Type", value: "Multiple selections", h: 136, x: 21, inset: 6, w: 502 },
  { label: "Select Preferred Neighborhood(s)", value: "Multiple selections", h: 150, x: 19, inset: 6, w: 502 },
  { label: "Select Number of Bathrooms", value: "All", h: 140, x: 19, inset: 6, w: 502 },
  { label: "Select Number of Visitors", value: "All", h: 148, x: 21, inset: 5.5, w: 504, small: true },
  { label: "Instant Book Available", value: "All", h: 120, x: 19, inset: 6, w: 502 },
];

const SCORES = [
  ["24.86", "Number of Reviews"],
  ["9.75", "Check-In Score"],
  ["9.47", "Cleanliness Score"],
  ["9.80", "Communication Score"],
];

export default function App() {
  return (
    <Page>
      <Global />
      <LogoCell>
        <Logo viewBox="26.5 1 496 219">
          <circle cx="127.3" cy="154.7" r="59.8" fill="#cff0e6" />
          <circle cx="79.8" cy="95" r="47.8" fill="#7da8af" />
          <circle cx="133.2" cy="46.8" r="35.8" fill="#5b616d" />
          {WORDMARK.map(([glyph, x, size, len]) => (
            <text key={glyph} x={x} y="159.7" fontSize={size} textLength={len} lengthAdjust="spacingAndGlyphs">{glyph}</text>
          ))}
        </Logo>
      </LogoCell>
      <Kpis>
        <Kpi $w={485} $h={222} $gap={87}>
          <KpiTitle>Number of Houses</KpiTitle>
          <KpiValue $mt={33} $shift={4}>16.30K</KpiValue>
        </Kpi>
        <Kpi $w={570} $h={222} $gap={2}>
          <KpiTitle>Neighborhoods to Choose From</KpiTitle>
          <KpiValue $mt={10}>21</KpiValue>
        </Kpi>
        <Kpi $w={506} $h={236} $gap={0}>
          <KpiTitle>Average Rating</KpiTitle>
          <KpiValue $mt={41}>95.18</KpiValue>
        </Kpi>
      </Kpis>
      <HRule />
      <VRule />
      <Sidebar>
        <Filter $h={180} $x={19}>
          <FilterLabel $inset={6}>Select Price Range</FilterLabel>
          <PriceRow>
            <PriceInput>5 €</PriceInput>
            <PriceInput>8,000 €</PriceInput>
          </PriceRow>
          <Slider>
            <Handle />
            <Track />
            <Handle />
          </Slider>
        </Filter>
        {FILTERS.map((f) => (
          <Filter key={f.label} $h={f.h} $x={f.x}>
            <FilterLabel $inset={f.inset}>{f.label}</FilterLabel>
            <Select $w={f.w} $small={f.small}>
              {f.value}
              <Chevron $small={f.small} viewBox="0 0 29 17">
                <path d="M1 1L14.5 15L28 1" />
              </Chevron>
            </Select>
          </Filter>
        ))}
      </Sidebar>
      <Main>
        <MapPanel>
          <PanelTitle>Map of Amsterdam</PanelTitle>
          <MapFrame>
            <AmsterdamMap />
            <MapControls>
              <ZoomButton aria-label="Zoom in">
                <svg viewBox="0 0 31 31"><path d="M0 15.5H31M15.5 0V31" /></svg>
              </ZoomButton>
              <ZoomButton aria-label="Zoom out">
                <svg viewBox="0 0 31 31"><path d="M0 15.5H31" /></svg>
              </ZoomButton>
            </MapControls>
            <BingMark>
              <BingTiles>
                <BingTile $color="#e36c37" />
                <BingTile $color="#96c554" />
                <BingTile $color="#4fa9e8" />
                <BingTile $color="#f6c343" />
              </BingTiles>
              Microsoft Bing
            </BingMark>
            <Credits>
              <span>© 2025 TomTom, © 2025 Microsoft Corporation</span>
              <TermsLink>Terms</TermsLink>
            </Credits>
          </MapFrame>
        </MapPanel>
        <ScorePanel>
          <PanelTitle>Average Score Per Property</PanelTitle>
          <ScoreRow>
            {SCORES.map(([value, label]) => (
              <Score key={label}>
                <ScoreValue>{value}</ScoreValue>
                <ScoreLabel>{label}</ScoreLabel>
              </Score>
            ))}
          </ScoreRow>
        </ScorePanel>
      </Main>
    </Page>
  );
}
